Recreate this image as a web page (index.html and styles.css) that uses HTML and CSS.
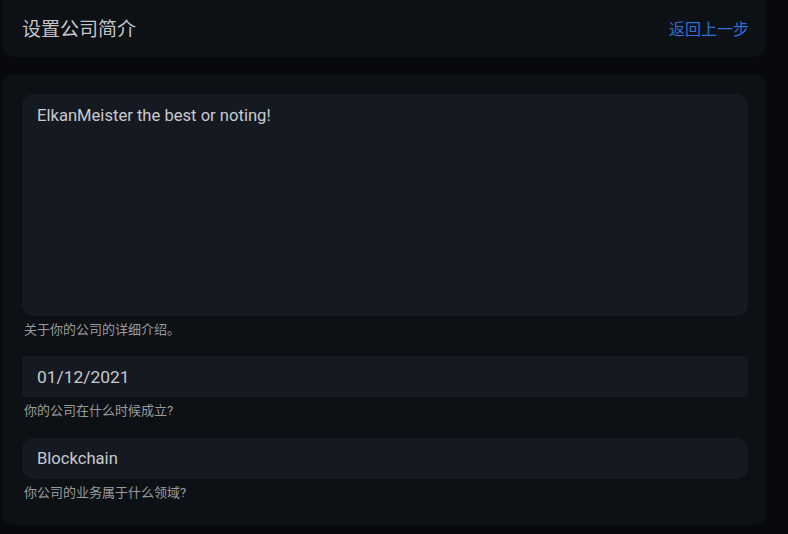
FILE: index.html
```html
<!DOCTYPE html>
<html lang="zh-CN">
<head>
    <meta charset="UTF-8">
    <meta name="viewport" content="width=device-width, initial-scale=1.0">
    <title>设置公司简介</title>
    <link rel="stylesheet" href="styles.css">
</head>
<body>
    <div class="page">
        <div class="header">
            <h1>设置公司简介</h1>
            <a href="#" class="back-link">返回上一步</a>
        </div>

        <form class="card">
            <div class="field">
                <textarea class="input input-area">ElkanMeister the best or noting!</textarea>
                <div class="hint">关于你的公司的详细介绍。</div>
            </div>
            <div class="field">
                <input type="text" class="input input-date" value="01/12/2021">
                <div class="hint">你的公司在什么时候成立?</div>
            </div>
            <div class="field">
                <input type="text" class="input input-round" value="Blockchain">
                <div class="hint">你公司的业务属于什么领域?</div>
            </div>
        </form>
    </div>
</body>
</html>
```

FILE: styles.css
```css
body {
    margin: 0;
    background-color: #07090c;
    font-family: Roboto, "Noto Sans CJK SC", sans-serif;
    color: #c9cacc;
}
.page {
    width: 764px;
    margin-left: 2px;
    display: flex;
    flex-direction: column;
    gap: 17px;
}
.header {
    height: 57px;
    box-sizing: border-box;
    padding: 0 18px 2px 20px;
    display: flex;
    align-items: center;
    justify-content: space-between;
    background-color: #0d1015;
    border-radius: 0 0 12px 12px;
}
h1 {
    margin: 0;
    font-size: 19px;
    font-weight: normal;
    color: #c4c5c7;
}
.back-link {
    color: #2f6fd6;
    font-size: 16px;
    text-decoration: none;
    margin-right: -1px;
}
.back-link:hover {
    text-decoration: underline;
}
.card {
    margin: 0;
    padding: 20px 18px 24px 20px;
    background-color: #0d1015;
    border-radius: 12px;
    display: flex;
    flex-direction: column;
    gap: 18px;
}
.field {
    display: flex;
    flex-direction: column;
}
.input {
    display: block;
    width: 100%;
    box-sizing: border-box;
    border: none;
    outline: none;
    background-color: #151922;
    color: #c9cacc;
    font-family: Roboto, "Noto Sans CJK SC", sans-serif;
    font-size: 16.6px;
    padding: 0 15px;
}
.input-area {
    height: 222px;
    padding-top: 12px;
    border-radius: 12px;
    resize: none;
    line-height: 20px;
}
.input-date {
    height: 41px;
    border-radius: 2px;
    font-size: 17.4px;
}
.input-round {
    height: 41px;
    margin-top: 1px;
    border-radius: 12px;
}
.hint {
    margin-top: 6px;
    padding-left: 2px;
    font-size: 13px;
    color: #9a9b9d;
    line-height: 16px;
}
```
